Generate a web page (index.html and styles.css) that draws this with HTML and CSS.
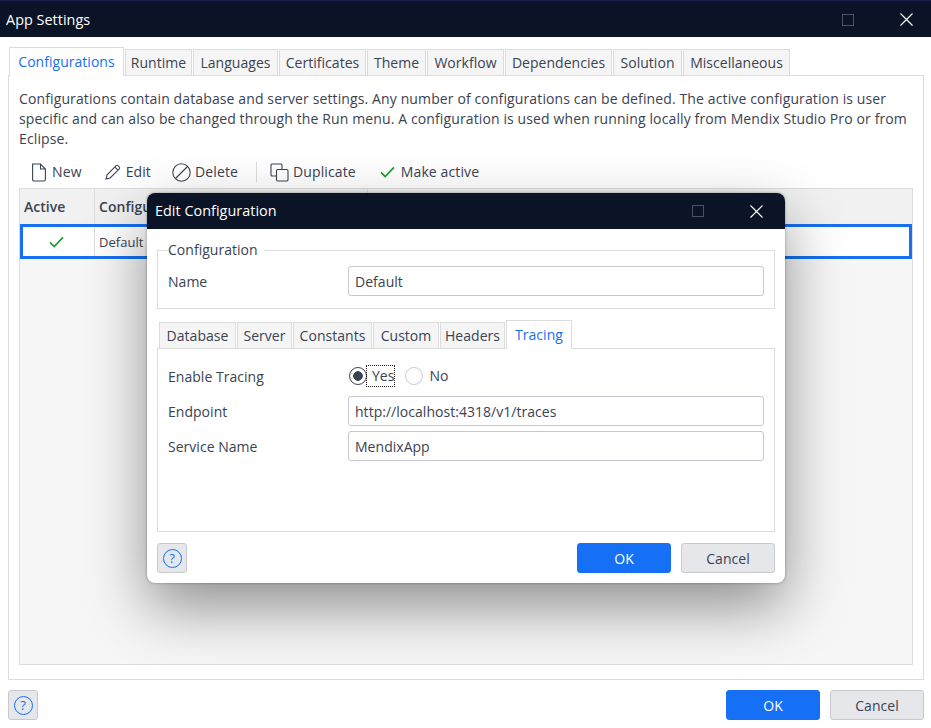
FILE: index.html
```html
<!DOCTYPE html>
<html>
<head>
    <link rel="stylesheet" href="styles.css">
</head>
<body>

<div class="window">
    <div class="titlebar main-title">
        <span class="title">App Settings</span>
        <span class="max-btn"></span>
        <svg class="close-btn" viewBox="0 0 13 13"><path d="M.5 .5L12.500 12.500M12.500 .5L.5 12.500"/></svg>
    </div>

    <div class="content">
        <div class="tabs main-tabs">
            <div class="tab active">Configurations</div>
            <div class="tab">Runtime</div>
            <div class="tab">Languages</div>
            <div class="tab">Certificates</div>
            <div class="tab">Theme</div>
            <div class="tab">Workflow</div>
            <div class="tab">Dependencies</div>
            <div class="tab">Solution</div>
            <div class="tab">Miscellaneous</div>
        </div>

        <div class="panel">
            <p class="desc">Configurations contain database and server settings. Any number of configurations can be defined. The active configuration is user specific and can also be changed through the Run menu. A configuration is used when running locally from Mendix Studio Pro or from Eclipse.</p>

            <div class="toolbar">
                <div class="tool tool-new">
                    <svg width="14" height="19" viewBox="0 0 14 19"><path d="M.6 1H8.500L13.400 6V16.500Q13.400 18 12 18H2Q.6 18 .6 16.500ZM8.500 1V6H13.400"/></svg>
                    New
                </div>
                <div class="tool tool-edit">
                    <svg width="16" height="16" viewBox="0 0 17 17"><path d="M1 16L2.200 11.500L11.800 1.800Q12.800 .9 13.800 1.800L15.200 3.200Q16.100 4.200 15.200 5.200L5.500 14.800ZM10.500 3.200L13.800 6.500"/></svg>
                    Edit
                </div>
                <div class="tool tool-delete">
                    <svg width="19" height="19" viewBox="0 0 19 19"><circle cx="9.500" cy="9.500" r="8.700"/><path d="M3.500 15.500L15.500 3.500"/></svg>
                    Delete
                </div>
                <div class="tool-sep"></div>
                <div class="tool tool-dup">
                    <svg width="19" height="19" viewBox="0 0 19 19"><path d="M6 13H2Q1 13 1 12V2Q1 1 2 1H11Q12 1 12 2V6"/><rect x="6.500" y="6.500" width="11.500" height="11.500" rx="1.200"/></svg>
                    Duplicate
                </div>
                <div class="tool tool-active">
                    <svg class="check" width="15" height="12" viewBox="0 0 16 13"><path d="M1 7L5.500 11.500L15 1.500"/></svg>
                    Make active
                </div>
            </div>

            <div class="grid">
                <div class="grid-head">
                    <div class="col col-active">Active</div>
                    <div class="col col-name">Configuration</div>
                    <div class="col col-rest"></div>
                </div>
                <div class="grid-row">
                    <div class="cell cell-active">
                        <svg class="check" width="15" height="12" viewBox="0 0 16 13"><path d="M1 7L5.500 11.500L15 1.500"/></svg>
                    </div>
                    <div class="cell cell-name">Default</div>
                </div>
            </div>
        </div>

        <div class="footer">
            <div class="btn help"><span class="help-icon">?</span></div>
            <div class="spacer"></div>
            <div class="btn primary">OK</div>
            <div class="btn">Cancel</div>
        </div>
    </div>
</div>

<!-- dialog on top of the main window -->
<div class="dialog">
    <div class="titlebar dialog-title">
        <span class="title">Edit Configuration</span>
        <span class="max-btn"></span>
        <svg class="close-btn" viewBox="0 0 13 13"><path d="M.5 .5L12.500 12.500M12.500 .5L.5 12.500"/></svg>
    </div>

    <div class="dialog-body">
        <fieldset class="group">
            <legend>Configuration</legend>
            <div class="form-row">
                <label>Name</label>
                <div class="input">Default</div>
            </div>
        </fieldset>

        <div class="tabs dialog-tabs">
            <div class="tab">Database</div>
            <div class="tab">Server</div>
            <div class="tab">Constants</div>
            <div class="tab">Custom</div>
            <div class="tab">Headers</div>
            <div class="tab active">Tracing</div>
        </div>

        <div class="dialog-panel">
            <div class="form-row radio-row">
                <label>Enable Tracing</label>
                <div class="radios">
                    <span class="radio checked"></span>
                    <span class="radio-label focused">Yes</span>
                    <span class="radio"></span>
                    <span class="radio-label">No</span>
                </div>
            </div>
            <div class="form-row">
                <label>Endpoint</label>
                <div class="input">http://localhost:4318/v1/traces</div>
            </div>
            <div class="form-row">
                <label>Service Name</label>
                <div class="input">MendixApp</div>
            </div>
        </div>

        <div class="footer dialog-footer">
            <div class="btn help"><span class="help-icon">?</span></div>
            <div class="spacer"></div>
            <div class="btn primary">OK</div>
            <div class="btn">Cancel</div>
        </div>
    </div>
</div>

</body>
</html>
```

FILE: styles.css
```css
* {
    box-sizing: border-box;
}
body {
    margin: 0;
    width: 931px;
    height: 728px;
    overflow: hidden;
    background: #fff;
    color: #3b4252;
    font-family: "Open Sans", sans-serif;
    font-size: 14px;
    line-height: 20px;
    letter-spacing: 0.03px;
}
.window {
    display: flex;
    flex-direction: column;
    height: 728px;
}
.titlebar {
    display: flex;
    align-items: center;
    background: #0a1426;
    color: #fff;
}
.main-title {
    height: 37px;
    padding: 1px 18px 0 6px;
    border-top: 1px solid #1c1c50;
}
.title {
    flex: 1;
    font-size: 14.400px;
}
.max-btn {
    width: 12px;
    height: 12px;
    border: 1px solid #4a5160;
    margin-right: 46px;
}
.close-btn {
    width: 13px;
    height: 13px;
}
.close-btn path {
    fill: none;
    stroke: #fff;
    stroke-width: 1.100;
}

.content {
    flex: 1;
    display: flex;
    flex-direction: column;
    padding: 10px 7px 8px 8px;
}
.tabs {
    display: grid;
    align-items: end;
    gap: 1px;
    padding-left: 1px;
}
.main-tabs {
    height: 28px;
    grid-template-columns: 115px 67px 85px 87px 59px 77px 107px 69px 107px;
}
.tab {
    height: 26px;
    background: #f5f5f6;
    border: 1px solid #dcdcdc;
    border-bottom: none;
    line-height: 26px;
    text-align: center;
}
.tab.active {
    height: 29px;
    background: #fff;
    color: #1670f0;
    margin-bottom: -1px;
    position: relative;
    line-height: 27px;
}
.panel {
    flex: 1;
    display: flex;
    flex-direction: column;
    border: 1px solid #dcdcdc;
    padding: 13px 10px 14px 10px;
}
.desc {
    margin: 0;
    height: 60px;
    letter-spacing: 0.12px;
}
.toolbar {
    display: flex;
    align-items: center;
    height: 32px;
    margin-top: 7px;
    letter-spacing: 0.12px;
}
.tool {
    display: flex;
    align-items: center;
    gap: 5px;
}
.tool svg path,
.tool svg circle,
.tool svg rect {
    fill: none;
    stroke: #3b4252;
    stroke-width: 1.100;
}
.tool-new {
    margin-left: 13px;
    gap: 6px;
}
.tool-edit {
    margin-left: 23px;
}
.tool-delete {
    margin-left: 21px;
    gap: 4px;
}
.tool-sep {
    width: 1px;
    height: 20px;
    background: #dcdcdc;
    margin: 0 13px 0 18px;
}
.tool-dup {
    gap: 4px;
}
.tool-active {
    margin-left: 24px;
    gap: 6px;
}
svg.check path,
.tool svg.check path {
    fill: none;
    stroke: #1a9a2c;
    stroke-width: 1.800;
}

.grid {
    flex: 1;
    background: #f6f6f6;
    border: 1px solid #dcdcdc;
}
.grid-head {
    display: flex;
    height: 35px;
    background: #f1f1f1;
    font-weight: 600;
}
.col {
    padding: 0 4px;
    line-height: 35px;
    border-right: 1px solid #dcdcdc;
}
.col-active {
    width: 75px;
}
.col-name {
    width: 273px;
}
.col-rest {
    flex: 1;
    border-right: none;
}
.grid-row {
    display: flex;
    height: 35px;
    background: #fff;
    border: 3px solid #1670f0;
}
.cell {
    display: flex;
    align-items: center;
    font-size: 13px;
}
.cell-active {
    width: 72px;
    padding-right: 4px;
    justify-content: center;
    border-right: 1px solid #dcdcdc;
}
.cell-name {
    padding-left: 4px;
}

.footer {
    display: flex;
    gap: 10px;
    margin-top: 10px;
}
.spacer {
    flex: 1;
}
.btn {
    width: 94px;
    height: 30px;
    border: 1px solid #c8c9ce;
    border-radius: 3px;
    background: #e6e7ea;
    text-align: center;
    line-height: 29px;
}
.btn.primary {
    background: #1670f5;
    border-color: #1670f5;
    color: #fff;
}
.btn.help {
    width: 30px;
    display: flex;
    align-items: center;
    justify-content: center;
}
.help-icon {
    width: 19px;
    height: 19px;
    border: 1.500px solid #1670f5;
    border-radius: 50%;
    color: #1670f5;
    font-size: 13px;
    line-height: 16px;
    text-align: center;
}

.dialog {
    position: absolute;
    left: 147px;
    top: 193px;
    width: 638px;
    height: 390px;
    display: flex;
    flex-direction: column;
    background: #fff;
    border-radius: 8px;
    box-shadow: 0 24px 60px rgba(0, 0, 0, 0.42), 0 0 3px rgba(0, 0, 0, 0.35);
    overflow: hidden;
}
.dialog-title {
    height: 36px;
    padding: 0 22px 0 8px;
}
.dialog-body {
    flex: 1;
    display: flex;
    flex-direction: column;
    padding: 0 10px;
}
.group {
    margin: 12px 0 0 0;
    padding: 0 10px;
    height: 68px;
    border: 1px solid #dcdcdc;
}
.group legend {
    padding: 0 6px 0 0;
    line-height: 18px;
}
.group .form-row {
    margin-top: 7px;
}
.form-row {
    display: flex;
    align-items: center;
    height: 30px;
}
.form-row label {
    width: 180px;
    padding-top: 2px;
}
.input {
    width: 416px;
    height: 30px;
    padding: 0 6px;
    border: 1px solid #c8c9ce;
    border-radius: 3px;
    line-height: 29px;
}
.dialog-tabs {
    margin-top: 11px;
    height: 28px;
    padding-left: 2px;
    grid-template-columns: 77px 55px 79px 66px 65px 66px;
}
.dialog-panel {
    height: 184px;
    border: 1px solid #dcdcdc;
    padding: 12px 10px 0 10px;
    display: flex;
    flex-direction: column;
    gap: 5px;
}
.radios {
    display: flex;
    align-items: center;
}
.radio {
    width: 18px;
    height: 18px;
    border: 1px solid #c8c9ce;
    border-radius: 50%;
    margin-left: 1px;
}
.radio.checked {
    border-color: #3b4252;
    border-width: 1.500px;
    background: radial-gradient(circle, #3b4252 0 4.500px, #fff 5px);
}
.radio-label {
    margin-left: 6px;
}
.radio-label.focused {
    outline: 1px dotted #222;
    margin-left: 0;
    padding-left: 5px;
    margin-right: 10px;
}
.dialog-footer {
    margin-top: 11px;
}
```
